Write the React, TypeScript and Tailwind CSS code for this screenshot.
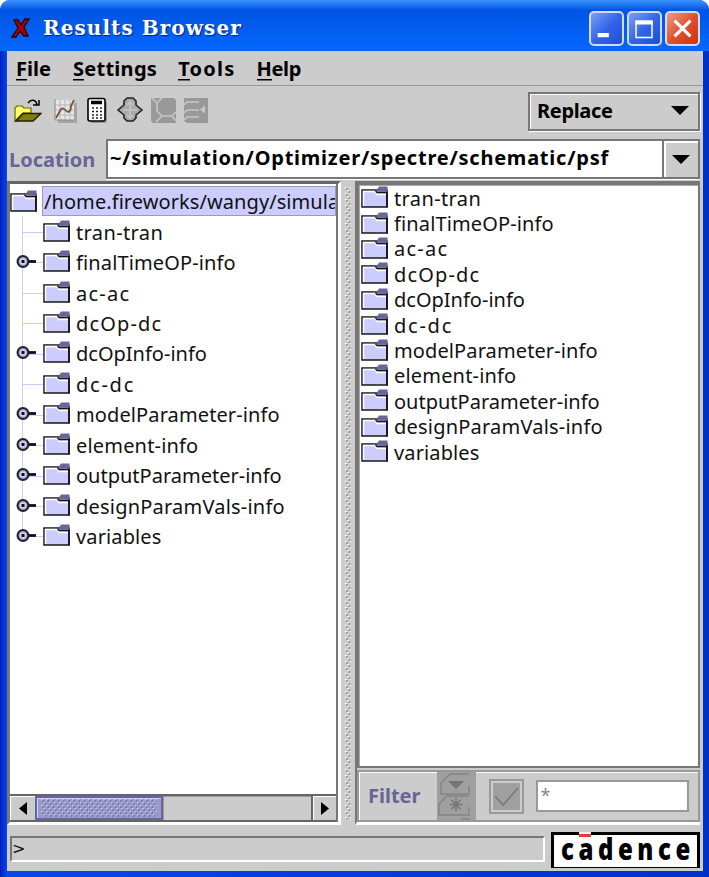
import { useLayoutEffect, useRef } from "react";

const tree = [
  { name: "tran-tran", w: 87, open: false },
  { name: "finalTimeOP-info", w: 160, open: true },
  { name: "ac-ac", w: 53, open: false },
  { name: "dcOp-dc", w: 85, open: false },
  { name: "dcOpInfo-info", w: 131, open: true },
  { name: "dc-dc", w: 57, open: false },
  { name: "modelParameter-info", w: 204, open: true },
  { name: "element-info", w: 122, open: true },
  { name: "outputParameter-info", w: 206, open: true },
  { name: "designParamVals-info", w: 209, open: true },
  { name: "variables", w: 85, open: true },
];

/* Text tracked so that it fills a given advance width. */
function Fit({ text, w, className = "", mnemonic = false }: { text: string; w: number; className?: string; mnemonic?: boolean }) {
  const ref = useRef<HTMLSpanElement>(null);
  useLayoutEffect(() => {
    const el = ref.current;
    if (!el) return;
    el.style.letterSpacing = "0px";
    const natural = el.offsetWidth;
    el.style.letterSpacing = `${(w - natural) / (text.length - 1)}px`;
  }, [text, w]);
  return (
    <span ref={ref} className={`inline-block shrink-0 whitespace-pre ${className}`}>
      {mnemonic ? <><span className="bg-[linear-gradient(#000,#000)] bg-[length:100%_1.5px] bg-[position:0_24px] bg-no-repeat pb-[2px]">{text[0]}</span>{text.slice(1)}</> : text}
    </span>
  );
}

function Folder() {
  return (
    <svg className="block h-[23px] w-[27px] shrink-0" viewBox="0 0 27 23">
      <path d="M1 4h25v17H1z" fill="#ccccff" stroke="#181818" strokeWidth="1.5" />
      <path d="M2.500 20V5.500H14l2 3h9" fill="none" stroke="#fff" strokeWidth="1.4" />
      <path d="M15 5L18 .5h8.500V5.500H15z" fill="#666699" />
      <path d="M14.500 5l1.500 1.500H26.500" fill="none" stroke="#181818" strokeWidth="1.300" />
      <path d="M26 6v15.500" stroke="#181818" strokeWidth="1.800" />
    </svg>
  );
}

function Handle() {
  return (
    <svg className="relative z-10 block h-[15px] w-[21px]" viewBox="0 0 21 15">
      <circle cx="7" cy="7.500" r="5.500" fill="#9999cc" stroke="#222" strokeWidth="2" />
      <circle cx="7" cy="7.500" r="3.200" fill="#d4d4fa" />
      <rect x="5.500" y="6" width="3" height="3" fill="#111" />
      <path d="M12.500 7.500H20" stroke="#111" strokeWidth="2.800" />
    </svg>
  );
}

function Bumps({ id, className, light, dark }: { id: string; className: string; light: string; dark: string }) {
  return (
    <svg className={className}>
      <defs>
        <pattern id={id} width="5.200" height="6" patternUnits="userSpaceOnUse">
          <rect x="0" y="0" width="1.400" height="1.400" fill={light} />
          <rect x="1.200" y="1.200" width="1.500" height="1.500" fill={dark} />
          <rect x="2.600" y="3" width="1.400" height="1.400" fill={light} />
          <rect x="3.700" y="4.200" width="1.500" height="1.500" fill={dark} />
        </pattern>
      </defs>
      <rect width="100%" height="100%" fill={`url(#${id})`} />
    </svg>
  );
}

function DownArrow() {
  return <svg className="h-[9px] w-[18px]" viewBox="0 0 18 9"><path d="M0 0h18L9 9z" fill="#000" /></svg>;
}

function TitleButton({ kind }: { kind: "min" | "max" | "close" }) {
  const bg = kind === "close" ? "bg-linear-to-br from-[#ec9a82] via-[#e0502c] to-[#c93409]" : "bg-linear-to-br from-[#7c9ff5] via-[#3465e8] to-[#1a4fd8]";
  return (
    <div className={`h-[35px] w-[35px] rounded-[5px] border-2 border-[#cfdcfa] ${bg}`}>
      <svg className="block h-full w-full" viewBox="0 0 33 33" fill="none" stroke="#fff">
        {kind === "min" && <path d="M7 23.500h12" strokeWidth="4.500" />}
        {kind === "max" && <><path d="M7.500 9v17h17V9" strokeWidth="1.600" /><path d="M6.700 10h18.600" strokeWidth="4.500" /></>}
        {kind === "close" && <path d="M8 8l17 17M25 8L8 25" strokeWidth="3.400" />}
      </svg>
    </div>
  );
}

function ToolIcons() {
  return (
    <div className="flex h-[28px] items-start">
      <svg className="ml-[7px] h-[28px] w-[28px]" viewBox="0 0 28 28">
        <path d="M1 24V11l2-2h5l2 2h7v5H9z" fill="#ffff66" stroke="#666600" strokeWidth="1.200" />
        <path d="M2 24L9 16.500h18L19 24z" fill="#808000" stroke="#222200" strokeWidth="1.500" />
        <path d="M14 6c3-4 8-4 9 2M19 8h6V3" fill="none" stroke="#000" strokeWidth="1.500" />
      </svg>
      <svg className="ml-[12px] h-[28px] w-[26px]" viewBox="0 0 26 28">
        <path d="M4 6h19v20H4z" fill="#a5a5a5" />
        <path d="M1 3h19v20H1z" fill="#e6e6e6" />
        <path d="M6 3v20M11 3v20M16 3v20M1 8h19M1 13h19M1 18h19" stroke="#b5b5b5" />
        <path d="M1 2v21h19" stroke="#888" fill="none" />
        <path d="M2 21l4-7q2-4 4-2t4 3q3 0 3-6l3-6" fill="none" stroke="#705030" strokeWidth="1.700" />
      </svg>
      <svg className="ml-[6px] h-[28px] w-[22px]" viewBox="0 0 22 28">
        <rect x="4" y="4" width="17" height="22" rx="2" fill="#999" />
        <rect x="2" y="1.500" width="17" height="22.500" rx="2" fill="#fff" stroke="#000" strokeWidth="1.600" />
        <path d="M5 5.500h11" stroke="#000" strokeWidth="3.500" />
        <path d="M6 11h10M6 14.500h10M6 18h10M6 21h10" stroke="#222" strokeWidth="1.500" strokeDasharray="2 2" />
      </svg>
      <svg className="ml-[8px] h-[28px] w-[28px]" viewBox="0 0 28 28">
        <path d="M11 1h6l3 3v4l6 5-6 5v3l-3 3h-6l-3-3v-3l-6-5 6-5V4z" fill="#aaa" stroke="#222" strokeWidth="1.600" />
        <path d="M14 4v18M7 13h14M11 8l3-3 3 3M11 18l3 3 3-3" fill="none" stroke="#c6c6c6" strokeWidth="1.500" />
      </svg>
      <svg className="ml-[6px] h-[28px] w-[28px]" viewBox="0 0 28 28">
        <path d="M1 1h23l2 2v23H3l-2-2z" fill="#999" />
        <path d="M2 1l5 5 5-5M7 6v8l5 5h10M12 19l-6 6M22 19l4-4M22 19l4 5" fill="none" stroke="#c8c8c8" strokeWidth="1.500" />
      </svg>
      <svg className="ml-[5px] h-[28px] w-[28px]" viewBox="0 0 28 28">
        <path d="M1 1h24v25H4l-3-2z" fill="#999" />
        <path d="M1 8l3-3h12M1 16l3-3h12M1 23l3-3h12" fill="none" stroke="#c8c8c8" strokeWidth="1.700" />
        <path d="M17 12.500l5-4v8z" fill="#c8c8c8" />
      </svg>
    </div>
  );
}

export default function App() {
  return (
    <div className="flex h-[877px] w-[709px] flex-col overflow-hidden rounded-t-[10px] bg-linear-to-r from-[#001fc0] via-[#0848e8] via-1% to-[#0030cc] font-['Noto_Sans',sans-serif] text-[20px] leading-none text-[#111]">
      <header className="flex h-[51px] shrink-0 items-center bg-linear-to-b from-[#3b94ff] via-[#0054e3] via-20% to-[#0568ff] pr-[9px] pl-[11px]">
        <svg className="mt-[5px] h-[22px] w-[20px]" viewBox="0 0 20 22">
          <path d="M3 3h4l3 5 4-6h4l-5 8 4 9h-4l-4-5-4 6H1l6-9z" fill="#a80000" stroke="#300000" strokeWidth="1.300" />
        </svg>
        <Fit text="Results Browser" w={198} className="mt-[4px] ml-[12px] font-['DejaVu_Serif',serif] text-[20px] font-bold text-white [text-shadow:1px_1px_1px_#002080]" />
        <div className="mt-[5px] ml-auto flex gap-[3px]"><TitleButton kind="min" /><TitleButton kind="max" /><TitleButton kind="close" /></div>
      </header>

      <div className="mr-[6px] mb-[6px] ml-[7px] flex min-h-0 flex-1 flex-col bg-[#cccccc]">
        <nav className="flex h-[35px] shrink-0 border-b border-[#999] pt-[8px] pl-[9px] font-bold text-black">
          <Fit mnemonic text="File" w={35} />
          <Fit mnemonic text="Settings" w={84} className="ml-[22px]" />
          <Fit mnemonic text="Tools" w={56} className="ml-[21px]" />
          <Fit mnemonic text="Help" w={45} className="ml-[21px]" />
        </nav>

        <div className="flex h-[51px] shrink-0 justify-between pt-[6px] pr-[3px]">
          <div className="pt-[5px]"><ToolIcons /></div>
          <div className="flex h-[39px] w-[172px] items-center justify-between border-2 border-[#777] pr-[9px] pb-[2px] pl-[7px] font-bold text-black shadow-[inset_1px_1px_0_#fff,1px_1px_0_#fff]">
            <Fit text="Replace" w={76} />
            <DownArrow />
          </div>
        </div>

        <div className="flex h-[44px] shrink-0 pt-[2px] pr-[3px] font-bold">
          <Fit text="Location" w={86} className="mt-[11px] ml-[2px] text-[#666699]" />
          <div className="ml-auto flex h-[40px] w-[594px] border-2 border-[#777] bg-white text-black shadow-[0_1px_0_#fff]">
            <Fit text="~/simulation/Optimizer/spectre/schematic/psf" w={498} className="mt-[7px] ml-[2px]" />
            <div className="ml-auto flex w-[36px] items-center justify-center border-l-2 border-[#777] bg-[#ccc] shadow-[inset_2px_2px_0_#fff]"><DownArrow /></div>
          </div>
        </div>

        <main className="flex h-[644px] shrink-0">
          <section className="flex w-[334px] flex-col border-t-[3px] border-r-[3px] border-b-[3px] border-l-[3px] border-t-[#666] border-r-white border-b-white border-l-[#777]">
            <div className="flex min-h-0 flex-1 flex-col border-r-2 border-[#777] bg-white">
              <div className="flex h-[32px] shrink-0 items-center overflow-hidden pt-[2px]">
                <Folder />
                <div className="ml-[5px] flex h-[30px] flex-1 items-center overflow-hidden border border-[#9999cc] bg-[#ccccff] pt-[2px] pl-[1px]">
                  <Fit text="/home.fireworks/wangy/simula" w={295} />
                </div>
              </div>
              <div className="relative flex flex-col">
                <div className="absolute top-0 left-[12px] h-[320px] w-px bg-[#ccccff]" />
                {tree.map((n) => (
                  <div key={n.name} className="flex h-[30.450px] items-center">
                    <div className="relative flex h-full w-[33px] items-center pl-[6px]">
                      <div className="absolute top-[16px] left-[12px] h-px w-[21px] bg-[#ccccff]" />
                      {n.open && <Handle />}
                    </div>
                    <Folder />
                    <Fit text={n.name} w={n.w} className="mt-[3px] ml-[6px]" />
                  </div>
                ))}
              </div>
              <div className="mt-auto flex h-[28px] shrink-0 border-y-2 border-[#666] bg-[#ccc]">
                <div className="flex w-[25px] items-center justify-center border-t border-l border-white"><svg className="h-[13px] w-[8px]" viewBox="0 0 8 13"><path d="M8 0v13L0 6.500z" /></svg></div>
                <div className="flex w-[128px] items-center justify-center border-2 border-[#666699] bg-[#9999cc] shadow-[inset_1px_1px_0_#ccccff]"><Bumps id="thumb" className="h-[18px] w-[116px]" light="#ccccff" dark="#666699" /></div>
                <div className="flex-1 shadow-[inset_1px_1px_0_#999]" />
                <div className="flex w-[25px] items-center justify-center border-l-2 border-[#666] shadow-[inset_1px_1px_0_#fff]"><svg className="h-[13px] w-[8px]" viewBox="0 0 8 13"><path d="M0 0v13l8-6.500z" /></svg></div>
              </div>
            </div>
          </section>

          <div className="w-[14px] shrink-0 pt-[6px] pl-[4px]"><Bumps id="divider" className="h-[632px] w-[6px]" light="#fff" dark="#777" /></div>

          <section className="flex w-[345px] shrink-0 flex-col border-t-2 border-b-[3px] border-l-2 border-t-[#777] border-b-white border-l-[#777] bg-[#ccc]">
            <div className="flex h-[587px] flex-col border-2 border-[#777] bg-white pl-[2px] shadow-[inset_1px_1px_0_#aaa]">
              {tree.map((n) => (
                <div key={n.name} className="flex h-[25.400px] shrink-0 items-center">
                  <Folder />
                  <Fit text={n.name} w={n.w} className="mt-[2px] ml-[6px]" />
                </div>
              ))}
            </div>
            <div className="mt-[2px] flex h-[52px] items-center border-2 border-[#999] pl-[9px] shadow-[inset_1px_1px_0_#fff]">
              <Fit text="Filter" w={52} className="font-bold text-[#666699]" />
              <svg className="ml-[17px] h-[48px] w-[39px] shrink-0" viewBox="0 0 39 48">
                <path d="M0 0h39v48H0z" fill="#9f9f9f" />
                <path d="M32 2H13L4 11v11h28V14M32 24H10l-8 8v11h30v-8M24 47h9" fill="none" stroke="#858585" strokeWidth="1.500" />
                <path d="M11 9h16l-8 8z" fill="#757575" />
                <path d="M19 26v13M12.500 32.500h13M14.500 28l9 9M23.500 28l-9 9" stroke="#757575" strokeWidth="1.500" />
              </svg>
              <div className="ml-[13px] flex h-[35px] w-[35px] shrink-0 items-center justify-center border-2 border-[#999]">
                <svg className="h-[27px] w-[27px] bg-[#a0a0a0]" viewBox="0 0 27 27"><path d="M2 13l8 9L25 5" fill="none" stroke="#777" strokeWidth="1.500" /></svg>
              </div>
              <div className="ml-[12px] h-[32px] w-[153px] border-2 border-[#999] bg-white pt-[4px] pl-[2px] text-[18px] text-[#888]">*</div>
            </div>
          </section>
        </main>

        <footer className="flex h-[46px] shrink-0 pl-[3px]">
          <div className="mt-[11px] h-[26px] w-[535px] border-2 border-t-[#777] border-r-white border-b-white border-l-[#777] pt-[3px] font-['DejaVu_Sans',sans-serif] text-[16px]">&gt;</div>
          <div className="relative mt-[7px] ml-[6px] h-[36px] w-[149px] border-[3px] border-b border-black bg-white pt-[1px] pl-[7px] text-black">
            <Fit text="cadence" w={162} className="origin-left scale-x-[0.8] font-['Open_Sans',sans-serif] text-[30px] leading-[25px] font-extrabold" />
            <div className="absolute -top-[3px] left-[25px] h-[5px] w-[12px] border-t-2 border-[#eee] bg-[#e43b40]" />
          </div>
        </footer>
      </div>
    </div>
  );
}
